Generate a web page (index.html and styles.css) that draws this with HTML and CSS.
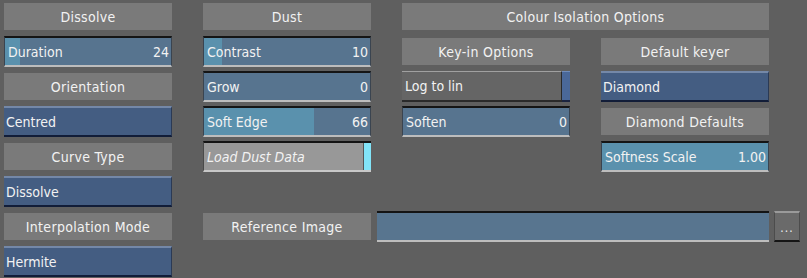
FILE: index.html
```html
<!DOCTYPE html>
<html lang="en">
<head>
  <meta charset="UTF-8">
  <title>Colour Isolation</title>
  <link rel="stylesheet" href="styles.css">
</head>
<body>
  <div class="panel">
    <!-- row 1 -->
    <div class="head c1 r1">Dissolve</div>
    <div class="head c2 r1">Dust</div>
    <div class="head c3 r1 wide">Colour Isolation Options</div>

    <!-- row 2 -->
    <div class="slider c1 r2"><span class="fill" style="width: 9%"></span><span>Duration</span><span>24</span></div>
    <div class="slider c2 r2"><span class="fill" style="width: 11%"></span><span>Contrast</span><span>10</span></div>
    <div class="head c3 r2">Key-in Options</div>
    <div class="head c4 r2">Default keyer</div>

    <!-- row 3 -->
    <div class="head c1 r3">Orientation</div>
    <div class="slider c2 r3"><span>Grow</span><span>0</span></div>
    <div class="toggle c3 r3"><span class="toggle-label">Log to lin</span><span class="toggle-led"></span></div>
    <div class="menu c4 r3">Diamond</div>

    <!-- row 4 -->
    <div class="menu c1 r4">Centred</div>
    <div class="slider c2 r4"><span class="fill" style="width: 66%"></span><span>Soft Edge</span><span>66</span></div>
    <div class="slider c3 r4"><span>Soften</span><span>0</span></div>
    <div class="head c4 r4">Diamond Defaults</div>

    <!-- row 5 -->
    <div class="head c1 r5">Curve Type</div>
    <div class="load c2 r5"><span class="load-label">Load Dust Data</span><span class="load-led"></span></div>
    <div class="slider c4 r5"><span class="fill" style="width: 100%"></span><span>Softness Scale</span><span>1.00</span></div>

    <!-- row 6 -->
    <div class="menu c1 r6">Dissolve</div>

    <!-- row 7 -->
    <div class="head c1 r7">Interpolation Mode</div>
    <div class="ref-row r7">
      <div class="head ref-head">Reference Image</div>
      <div class="field"></div>
    </div>
    <div class="browse r7">...</div>

    <!-- row 8 -->
    <div class="menu c1 r8">Hermite</div>
  </div>
</body>
</html>
```

FILE: styles.css
```css
/* General Reset */
body, html {
  margin: 0;
  padding: 0;
  background-color: #5f5f5f;
  font-family: "DejaVu Sans Condensed", "DejaVu Sans", sans-serif;
  font-size: 14px;
  color: #f2f2f2;
}

/* Panel grid: 4 columns of 168px, 35px rows */
.panel {
  display: grid;
  grid-template-columns: 168px 31px 168px 31px 168px 31px 168px 5px 26px;
  grid-auto-rows: 35px;
  padding: 1px 0 0 4px;
  width: 807px;
  height: 278px;
  box-sizing: border-box;
}

.c1 { grid-column: 1; }
.c2 { grid-column: 3; }
.c3 { grid-column: 5; }
.c4 { grid-column: 7; }
.wide { grid-column: 5 / 8; }

.r1 { grid-row: 1; }
.r2 { grid-row: 2; }
.r3 { grid-row: 3; }
.r4 { grid-row: 4; }
.r5 { grid-row: 5; }
.r6 { grid-row: 6; }
.r7 { grid-row: 7; }
.r8 { grid-row: 8; }

/* Section headers */
.head {
  background-color: #7a7a7a;
  height: 27px;
  margin-top: 2px;
  display: flex;
  align-items: center;
  justify-content: center;
  letter-spacing: 0.3px;
}

/* Numeric sliders */
.slider {
  position: relative;
  height: 31px;
  box-sizing: border-box;
  background-color: #57748f;
  border-top: 2px solid #151515;
  border-bottom: 2px solid #bdbdbd;
  border-left: 1px solid #3a4450;
  border-right: 1px solid #3a4450;
  display: flex;
  align-items: center;
  justify-content: space-between;
  padding: 0 2px 0 3px;
}

.slider span {
  position: relative;
}

.slider .fill {
  position: absolute;
  left: 0;
  top: 0;
  bottom: 0;
  background-color: #5a91ad;
}

/* Dropdown menus */
.menu {
  height: 31px;
  box-sizing: border-box;
  background-color: #445d82;
  border-top: 2px solid #7488a8;
  border-bottom: 2px solid #121d38;
  border-right: 1px solid #2b3a55;
  display: flex;
  align-items: center;
  padding-left: 2px;
}

/* Toggle button with indicator */
.toggle {
  height: 31px;
  display: flex;
  box-sizing: border-box;
}

.toggle-label {
  flex: 1;
  background-color: #656565;
  border-top: 1px solid #a0a0a0;
  border-bottom: 2px solid #2a2a2a;
  border-right: 1px solid #2a2a2a;
  display: flex;
  align-items: center;
  padding-left: 3px;
}

.toggle-led {
  width: 8px;
  background-color: #4a6899;
  border-top: 1px solid #6f8cba;
  border-bottom: 2px solid #1a2440;
}

/* Load button */
.load {
  height: 31px;
  display: flex;
  box-sizing: border-box;
  background-color: #989898;
  border-top: 2px solid #141414;
  border-bottom: 2px solid #c8c8c8;
  border-left: 1px solid #4a4a4a;
}

.load-label {
  flex: 1;
  display: flex;
  align-items: center;
  padding-left: 3px;
  font-style: italic;
}

.load-led {
  width: 7px;
  background-color: #82e4f8;
  border-left: 1px solid #555;
}

/* Reference image row */
.ref-row {
  grid-column: 3 / 8;
  display: flex;
  gap: 6px;
}

.ref-head {
  width: 168px;
  flex-shrink: 0;
}

.field {
  flex: 1;
  height: 31px;
  box-sizing: border-box;
  background-color: #58758f;
  border-top: 2px solid #141414;
  border-bottom: 2px solid #bdbdbd;
}

.browse {
  grid-column: 9;
  height: 31px;
  box-sizing: border-box;
  background-color: #6a6a6a;
  border-top: 2px solid #9a9a9a;
  border-bottom: 2px solid #151515;
  border-left: 1px solid #4c4c4c;
  border-right: 1px solid #4c4c4c;
  display: flex;
  align-items: center;
  justify-content: center;
  font-size: 12px;
  letter-spacing: 1px;
  padding-top: 3px;
}
```
